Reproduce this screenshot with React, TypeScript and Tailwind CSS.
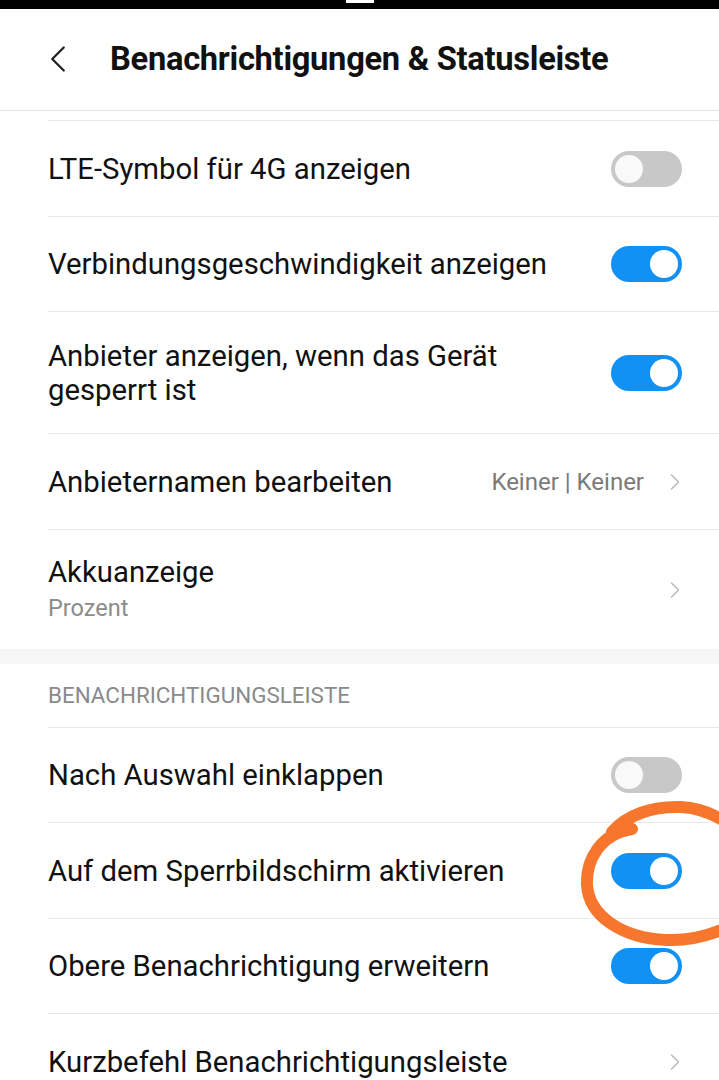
import { ChevronLeft, ChevronRight } from "lucide-react"

type Row =
  | { kind: "toggle"; label: string[]; on: boolean; h: string }
  | { kind: "link"; label: string; value?: string; sub?: string; h: string; last?: boolean }

const top: Row[] = [
  { kind: "toggle", label: ["LTE-Symbol für 4G anzeigen"], on: false, h: "h-[96px]" },
  { kind: "toggle", label: ["Verbindungsgeschwindigkeit anzeigen"], on: true, h: "h-[95px]" },
  { kind: "toggle", label: ["Anbieter anzeigen, wenn das Gerät", "gesperrt ist"], on: true, h: "h-[122px]" },
  { kind: "link", label: "Anbieternamen bearbeiten", value: "Keiner | Keiner", h: "h-[96px]" },
  { kind: "link", label: "Akkuanzeige", sub: "Prozent", h: "h-[119px]", last: true },
]

const bottom: Row[] = [
  { kind: "toggle", label: ["Nach Auswahl einklappen"], on: false, h: "h-[95px]" },
  { kind: "toggle", label: ["Auf dem Sperrbildschirm aktivieren"], on: true, h: "h-[96px]" },
  { kind: "toggle", label: ["Obere Benachrichtigung erweitern"], on: true, h: "h-[95px]" },
  { kind: "link", label: "Kurzbefehl Benachrichtigungsleiste", h: "h-[96px]" },
]

function Toggle({ on }: { on: boolean }) {
  return (
    <div
      className={
        "w-[71px] h-[36px] rounded-full flex items-center px-[4px] " +
        (on ? "bg-[#1191f3] justify-end" : "bg-[#c8c8c8] justify-start")
      }
    >
      <div
        className={
          "w-[28px] h-[28px] rounded-full " +
          (on ? "bg-white" : "bg-[#f9f9f9]")
        }
      />
    </div>
  )
}

function SettingRow({ row }: { row: Row }) {
  const border = row.kind === "link" && row.last ? "" : "border-b border-[#e8e8e8]"
  return (
    <div className={`ml-[48px] pr-[37px] flex items-center ${row.h} ${border}`}>
      <div className="flex-1 min-w-0">
        {row.kind === "toggle" ? (
          row.label.map((l) => (
            <div key={l} className="text-[29.3px] leading-[34px] text-[#111]">{l}</div>
          ))
        ) : (
          <>
            <div className="text-[29.3px] leading-[34px] text-[#111]">{row.label}</div>
            {row.sub && <div className="text-[23.5px] leading-[34px] mt-[2px] text-[#8c8c8c]">{row.sub}</div>}
          </>
        )}
      </div>
      {row.kind === "toggle" ? (
        <Toggle on={row.on} />
      ) : (
        <div className="flex items-center">
          {row.value && <span className="text-[24px] text-[#7a7a7a] mr-[17px]">{row.value}</span>}
          <ChevronRight size={28} strokeWidth={1.1} className="text-[#b5b5b5] -mr-[7px]" />
        </div>
      )}
    </div>
  )
}

export default function App() {
  return (
    <div className="relative w-[719px] h-[1080px] overflow-hidden bg-white" style={{ fontFamily: "Roboto, 'Noto Sans', sans-serif" }}>
      {/* status bar remnant */}
      <div className="h-[9px] bg-black flex justify-center">
        <div className="w-[28px] h-[3px] bg-white" />
      </div>

      {/* header */}
      <div className="h-[102px] border-b border-[#e4e4e4] flex items-center">
        <ChevronLeft size={46} strokeWidth={1.2} className="text-[#222] ml-[35px] -mt-[2px]" />
        <h1 className="ml-[29px] text-[32.7px] font-bold text-[#111] tracking-[-0.3px]">Benachrichtigungen &amp; Statusleiste</h1>
      </div>
      <div className="ml-[48px] h-[10px] border-b border-[#e8e8e8]" />

      {top.map((r, i) => <SettingRow key={i} row={r} />)}

      <div className="h-[15px] bg-[#f6f6f6]" />

      <div className="ml-[48px] h-[64px] border-b border-[#e8e8e8] flex items-center">
        <span className="text-[22.4px] text-[#8a8a8a] uppercase">Benachrichtigungsleiste</span>
      </div>

      {bottom.map((r, i) => <SettingRow key={i} row={r} />)}

      {/* hand-drawn marker around the toggle */}
      <svg className="absolute left-0 top-0 pointer-events-none" width="719" height="1080" viewBox="0 0 719 1080">
        <g fill="none" stroke="#f5762c" strokeWidth="12" strokeLinecap="round">
          <path d="M 632 829 C 600 834, 586 860, 587 885 C 589 916, 622 938, 666 940 C 690 941, 710 935, 726 928" />
          <path d="M 612 832 C 627 815, 652 806, 681 807 C 700 808, 715 815, 726 822" />
        </g>
      </svg>
    </div>
  )
}
